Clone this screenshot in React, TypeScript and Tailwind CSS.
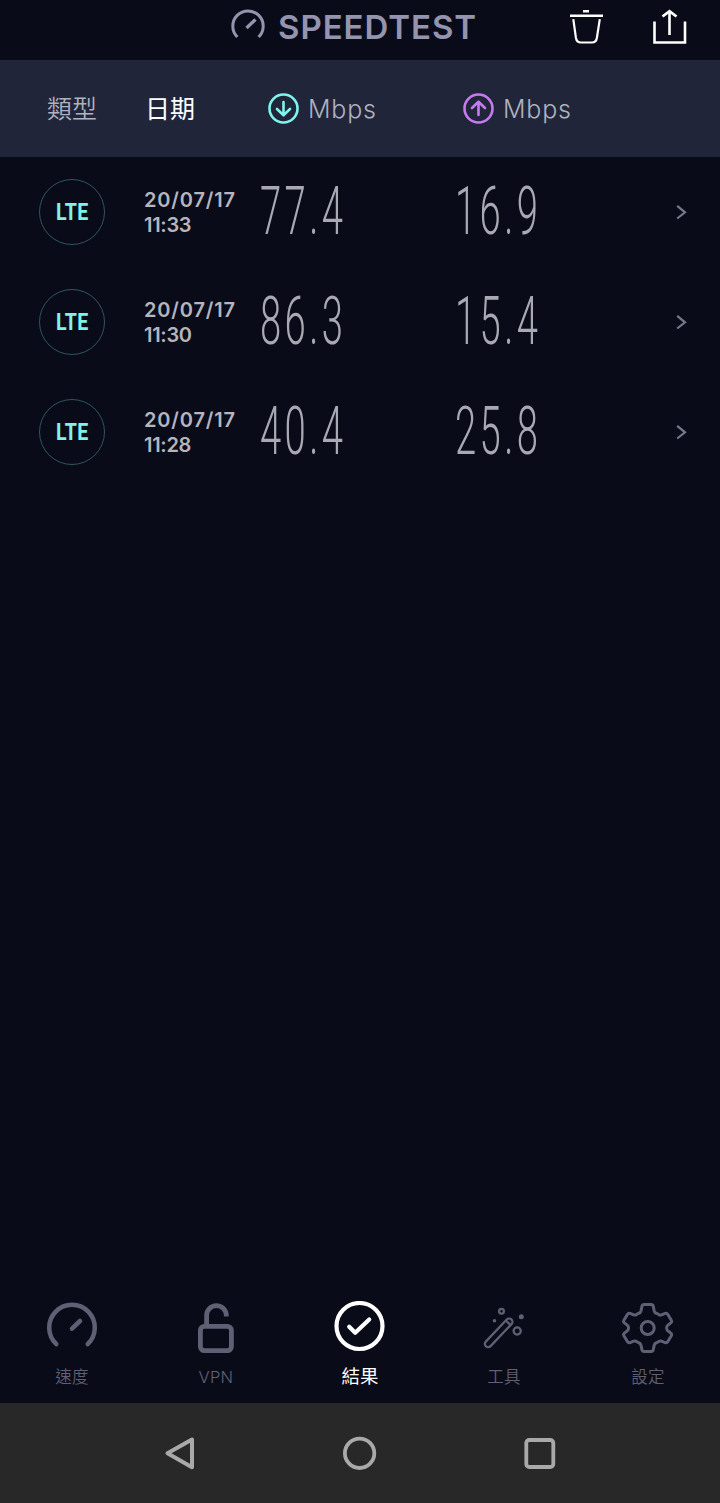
import type { ReactNode } from "react";

const results = [
  { date: "20/07/17", time: "11:33", down: "77.4", up: "16.9" },
  { date: "20/07/17", time: "11:30", down: "86.3", up: "15.4" },
  { date: "20/07/17", time: "11:28", down: "40.4", up: "25.8" },
];

function TrashIcon() {
  return (
    <svg width="36" height="36" viewBox="0 0 36 36" fill="none" stroke="currentColor" strokeWidth="2.2">
      <path d="M14 2.300h6M1 6.700h33" strokeWidth="2.500" />
      <path d="M4.300 10.200l2.600 18.500c.5 3 2 4.800 5 4.800h11c3 0 4.500-1.800 5-4.800l2.900-18.500" />
    </svg>
  );
}

function ShareIcon() {
  return (
    <svg width="36" height="36" viewBox="0 0 36 36" fill="none" stroke="currentColor" strokeWidth="2.6">
      <path d="M2.500 12.500v21h30.500v-21M17.500 26V2.500" />
      <path d="M10.500 7.500L17.500 2.200 24.500 7.500" strokeWidth="2.800" />
    </svg>
  );
}

function ArrowCircle({ up }: { up?: boolean }) {
  return (
    <svg width="32" height="32" viewBox="0 0 32 32" fill="none" stroke="currentColor" strokeWidth="2.6">
      <circle cx="16.500" cy="15.500" r="14" />
      {up ? (
        <path d="M16.500 22V9.200M10 15l6.500-6.300L23 15" strokeLinecap="round" strokeLinejoin="round" />
      ) : (
        <path d="M16.500 9v12.800M10 16l6.500 6.300L23 16" strokeLinecap="round" strokeLinejoin="round" />
      )}
    </svg>
  );
}

function Speed({ value }: { value: string }) {
  return (
    <div className="w-[195px] whitespace-nowrap">
      <span className="inline-block origin-left scale-x-[0.57] pb-[3px] font-['Roboto',sans-serif] text-[67px] leading-[72px] font-light tracking-[6px] text-[#a9a9b3]">
        {value}
      </span>
    </div>
  );
}

function GaugeIcon() {
  return (
    <svg width="54" height="54" viewBox="0 0 54 54" fill="none" stroke="currentColor" strokeWidth="4.500" strokeLinecap="round">
      <path d="M11.300 43.200a22.800 22.800 0 1 1 31.400 0" />
      <path d="M27 27.600l8-7.600" />
    </svg>
  );
}

function LockIcon() {
  return (
    <svg width="54" height="54" viewBox="0 0 54 54" fill="none" stroke="currentColor" strokeWidth="4.800">
      <rect x="11.400" y="25.400" width="31" height="24.200" rx="4" />
      <path d="M17.600 25V14.500a9.800 9.800 0 0 1 19.700 0v1" />
    </svg>
  );
}

function CheckIcon() {
  return (
    <svg width="54" height="54" viewBox="0 0 54 54" fill="none" stroke="currentColor" strokeWidth="4.200">
      <circle cx="26.500" cy="25" r="23" />
      <path d="M16.200 25.700l6 6 14-13.200" strokeLinecap="round" strokeLinejoin="round" />
    </svg>
  );
}

function WandIcon() {
  return (
    <svg width="54" height="54" viewBox="0 0 54 54" fill="none" stroke="currentColor" strokeWidth="2.300">
      <rect x="-3.300" y="-18" width="6.600" height="37" rx="3.300" transform="translate(22 31.500) rotate(43.500)" />
      <path d="M28.800 19.500l4.800 4.600" />
      <circle cx="24.500" cy="10.200" r="2.400" />
      <circle cx="40.200" cy="30" r="3.600" />
      <g fill="currentColor" stroke="none">
        <circle cx="17.500" cy="19.800" r="1.800" />
        <circle cx="44.300" cy="15.700" r="2.500" />
      </g>
    </svg>
  );
}

function GearIcon() {
  return (
    <svg width="54" height="54" viewBox="0 0 54 54" fill="none" stroke="currentColor" strokeWidth="3" strokeLinejoin="round">
      <circle cx="26.700" cy="27" r="6.500" />
      <path
        transform="translate(-.4 0)"
        d="M23.400 3.500h7.200q1.600 0 2 1.600l1.100 5q.4 1.600 2 2.100 1.300.5 2.500 1.400 1.300.8 2.700.2l3.600-1.400q1.700-.6 2.600.9l3.600 6q.8 1.500-.5 2.600l-3.100 2.500q-1.200 1-1.100 2.600t1.100 2.600l3.100 2.500q1.300 1.100.5 2.600l-3.600 6q-.9 1.500-2.600.9l-3.600-1.400q-1.400-.6-2.700.2-1.200.9-2.500 1.400-1.600.5-2 2.100l-1.100 5q-.4 1.600-2 1.600h-7.200q-1.600 0-2-1.600l-1.100-5q-.4-1.600-2-2.100-1.300-.5-2.500-1.400-1.300-.8-2.700-.2l-3.600 1.400q-1.700.6-2.600-.9l-3.600-6q-.8-1.500.5-2.600l3.100-2.500q1.100-1 1.100-2.600t-1.100-2.600l-3.100-2.500q-1.300-1.100-.5-2.600l3.600-6q.9-1.500 2.600-.9l3.600 1.400q1.400.6 2.700-.2 1.200-.9 2.500-1.400 1.600-.5 2-2.100l1.100-5q.4-1.600 2-1.600z"
      />
    </svg>
  );
}

function NavItem({ icon, label, active }: { icon: ReactNode; label: string; active?: boolean }) {
  return (
    <button
      className={
        active
          ? "flex flex-col items-center text-white"
          : "flex flex-col items-center text-[#5f6074]"
      }
    >
      {icon}
      <span
        className={
          active
            ? "mt-2 text-[18.5px] leading-[26px]"
            : "mt-2 text-[16.5px] leading-[28px] font-[350] tracking-[0.3px]"
        }
      >
        {label}
      </span>
    </button>
  );
}

export default function App() {
  return (
    <div className="flex h-[1503px] w-[720px] flex-col overflow-hidden bg-[#090b19] font-['Inter','Noto_Sans_CJK_TC',sans-serif]">
      {/* Title bar */}
      <header className="flex h-[60px] shrink-0 items-start pl-[230px] text-[#9494ae]">
        <svg className="mt-[9px]" width="36" height="32" viewBox="0 0 36 32" fill="none" stroke="currentColor" strokeWidth="3">
          <path d="M7.400 28a15.200 15.200 0 1 1 21.200 0" />
          <path d="M16.500 19l9-8.500" strokeWidth="3.300" />
        </svg>
        <h1 className="ml-[12px] w-[291px] whitespace-nowrap text-[33px] leading-[54px] font-semibold tracking-[0.95px]">
          SPEEDTEST
        </h1>
        <button className="mt-[9px] text-white"><TrashIcon /></button>
        <button className="mt-[9px] ml-[47px] text-white"><ShareIcon /></button>
      </header>

      {/* Column headings */}
      <div className="flex h-[97px] shrink-0 items-center bg-[#20253a] pl-[47px] text-[25px] text-[#b0b1bf]">
        <span className="w-[98px] pb-[2px] font-['Noto_Sans_CJK_TC',sans-serif] font-[350]">類型</span>
        <span className="w-[122px] pb-[2px] font-['Noto_Sans_CJK_TC',sans-serif] text-white">日期</span>
        <div className="flex w-[195px] items-center gap-[9px]">
          <span className="text-[#7ef4ec]"><ArrowCircle /></span>
          <span className="pt-[2px] font-[350] tracking-[0.8px]">Mbps</span>
        </div>
        <div className="flex items-center gap-[9px]">
          <span className="text-[#c77af0]"><ArrowCircle up /></span>
          <span className="pt-[2px] font-[350] tracking-[0.8px]">Mbps</span>
        </div>
      </div>

      <main className="flex-1">
        {results.map((r) => (
          <div key={r.time} className="flex h-[110px] items-center pl-[39px]">
            <div className="flex size-[66px] items-center justify-center rounded-full border-[1.5px] border-[#2f575d]">
              <span className="inline-block scale-x-[0.85] pt-[2px] font-['Roboto',sans-serif] text-[23px] font-bold tracking-[0.5px] text-[#80f3e9]">
                LTE
              </span>
            </div>
            <div className="ml-[39px] w-[116px] pt-[2px] text-[20px] leading-[25px] font-semibold text-[#b5b5bf]">
              <p className="tracking-[0.85px]">{r.date}</p>
              <p className="tracking-[-0.3px]">{r.time}</p>
            </div>
            <Speed value={r.down} />
            <Speed value={r.up} />
            <svg className="ml-[26px]" width="12" height="16" viewBox="0 0 12 16" fill="none" stroke="#77788a" strokeWidth="2.200">
              <path d="M1.200 1.800L9 8.300l-7.800 6.200" />
            </svg>
          </div>
        ))}
      </main>

      {/* Tabs */}
      <nav className="grid h-[102px] shrink-0 grid-cols-5">
        <NavItem icon={<GaugeIcon />} label="速度" />
        <NavItem icon={<LockIcon />} label="VPN" />
        <NavItem icon={<CheckIcon />} label="結果" active />
        <NavItem icon={<WandIcon />} label="工具" />
        <NavItem icon={<GearIcon />} label="設定" />
      </nav>

      {/* Android buttons */}
      <div className="flex h-[100px] shrink-0 items-center justify-between bg-[#282828] px-[162px] text-[#a9a9a9]">
        <svg width="36" height="36" viewBox="0 0 36 36" fill="none" stroke="currentColor" strokeWidth="4" strokeLinejoin="round">
          <path d="M5.500 18.300L30 4.500v27.700z" />
        </svg>
        <svg width="36" height="36" viewBox="0 0 36 36" fill="none" stroke="currentColor" strokeWidth="3.800">
          <circle cx="17.600" cy="18.300" r="14.700" />
        </svg>
        <svg width="36" height="36" viewBox="0 0 36 36" fill="none" stroke="currentColor" strokeWidth="3.800">
          <rect x="4.300" y="5" width="27" height="27" rx="3" />
        </svg>
      </div>
    </div>
  );
}
